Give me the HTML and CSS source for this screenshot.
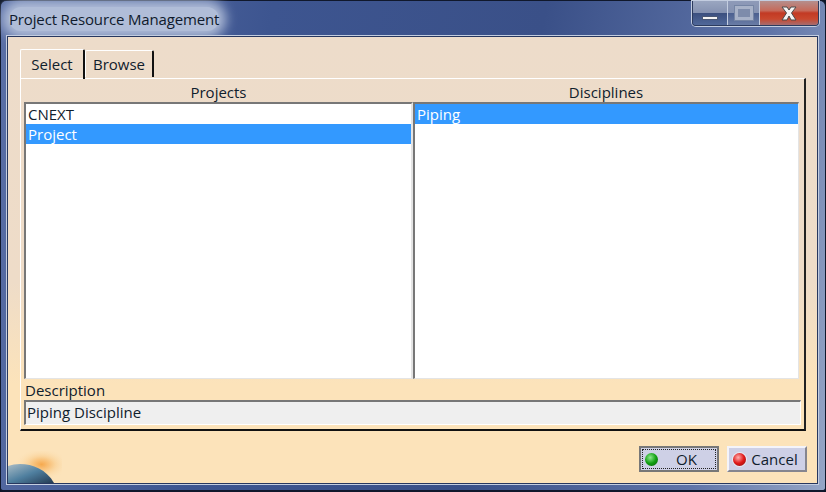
FILE: index.html
```html
<!DOCTYPE html>
<html lang="en">

<head>
    <meta charset="UTF-8">
    <title>Project Resource Management</title>
    <link rel="stylesheet" href="styles.css">
</head>

<body>
    <div class="window">
        <div class="titlebar">
            <div class="title">Project Resource Management</div>
            <div class="controls">
                <div class="ctl ctl_min"><span class="min_bar"></span></div>
                <div class="ctl ctl_max"><span class="max_box"></span></div>
                <div class="ctl ctl_close">
                    <svg width="26" height="15" viewBox="0 0 26 15">
                        <path d="M6 1h5l2 3 2-3h5l-4.500 6 4.500 7h-5l-2-4-2 4H6l4.500-7z" fill="#f4f4f4" stroke="#4a4a4a" stroke-width="1"/>
                    </svg>
                </div>
            </div>
        </div>
        <div class="client">
            <div class="tabs">
                <div class="tab tab_on">Select</div>
                <div class="tab">Browse</div>
            </div>
            <div class="panel">
                <div class="columns">
                    <div class="col">
                        <div class="col_head">Projects</div>
                        <ul class="list">
                            <li>CNEXT</li>
                            <li class="selected">Project</li>
                        </ul>
                    </div>
                    <div class="col col_right">
                        <div class="col_head">Disciplines</div>
                        <ul class="list">
                            <li class="selected">Piping</li>
                        </ul>
                    </div>
                </div>
                <div class="desc_label">Description</div>
                <div class="desc_field">Piping Discipline</div>
            </div>
            <div class="footer">
                <svg class="planet" width="54" height="32" viewBox="0 0 54 32">
                    <defs>
                        <radialGradient id="glow" cx="0.62" cy="0.42" r="0.5">
                            <stop offset="0" stop-color="#f6a94e"/>
                            <stop offset="0.5" stop-color="#fad49c"/>
                            <stop offset="1" stop-color="#fce3ba" stop-opacity="0"/>
                        </radialGradient>
                        <linearGradient id="earth" x1="0" y1="0" x2="1" y2="1">
                            <stop offset="0" stop-color="#a9bcc6"/>
                            <stop offset="0.5" stop-color="#4f7f9f"/>
                            <stop offset="1" stop-color="#243a52"/>
                        </linearGradient>
                    </defs>
                    <rect width="54" height="32" fill="url(#glow)"/>
                    <path d="M0 15 C14 10 36 14 46 32 L0 32z" fill="url(#earth)"/>
                </svg>
                <div class="buttons">
                    <div class="btn btn_default">
                        <span class="ball ball_green"></span>
                        <span class="btn_text">OK</span>
                    </div>
                    <div class="btn">
                        <span class="ball ball_red"></span>
                        <span class="btn_text">Cancel</span>
                    </div>
                </div>
            </div>
        </div>
    </div>
</body>

</html>
```

FILE: styles.css
```css
* {
    margin: 0;
    padding: 0;
    box-sizing: border-box;
}

html,
body {
    height: 100%;
}

body {
    font-family: "Open Sans", "Liberation Sans", sans-serif;
    font-size: 15px;
    color: #10202c;
    background: #0d1526;
    overflow: hidden;
}

.window {
    height: 492px;
    display: flex;
    flex-direction: column;
    border: 1px solid #10182c;
    border-bottom-width: 2px;
    border-radius: 6px 6px 4px 4px;
    background: linear-gradient(100deg, #5a6fa6 0%, #3d5590 30%, #3a5088 60%, #5f74a8 85%, #96a6c6 100%);
}

.titlebar {
    height: 35px;
    display: flex;
    justify-content: space-between;
    padding: 0 6px 0 8px;
}

.title {
    height: 24px;
    margin-top: 6px;
    font-size: 15px;
    line-height: 24px;
    letter-spacing: -0.15px;
    color: #0f1a2c;
    background: #b0bdd8;
    box-shadow: 0 0 12px 7px #b0bdd8;
    border-radius: 12px;
}

.controls {
    display: flex;
    height: 25px;
    border: 1px solid #2c3b5e;
    border-top: 0;
    border-radius: 0 0 4px 4px;
    overflow: hidden;
    box-shadow: 0 0 0 1px #c3cde0;
}

.ctl {
    display: flex;
    align-items: center;
    justify-content: center;
}

.ctl_min {
    width: 35px;
    border-right: 1px solid #c3cde0;
    background: linear-gradient(#9aa6c0 0%, #8592b1 48%, #3c507f 52%, #50689a 100%);
    align-items: flex-end;
    padding-bottom: 5px;
}

.min_bar {
    width: 16px;
    height: 4px;
    background: #f4f4f4;
    border: 1px solid #4a5874;
}

.ctl_max {
    width: 32px;
    background: linear-gradient(#8e9ab8 0%, #8592b1 48%, #4c6090 52%, #6a7da6 100%);
    border-right: 1px solid #c3cde0;
}

.max_box {
    width: 18px;
    height: 14px;
    background: #7e8cab;
    border: 3px solid #a8b2c8;
    box-shadow: 0 0 0 1px #7585a5;
}

.ctl_close {
    width: 58px;
    background: linear-gradient(#b58e8c 0%, #c66a5a 40%, #c23a24 50%, #c9482e 75%, #a56c70 100%);
}

.client {
    margin: 0 7px 6px 6px;
    flex: 1;
    padding: 12px 12px 0 12px;
    display: flex;
    flex-direction: column;
    border: 1px solid #27375f;
    background: linear-gradient(#eddcca 0%, #eedcc8 55%, #fce3ba 78%, #fce3ba 100%);
    box-shadow: 0 0 0 1px #c3cde0;
}

.tabs {
    height: 30px;
    display: flex;
    align-items: flex-end;
    margin-bottom: -1px;
    position: relative;
    z-index: 1;
}

.tab {
    width: 69px;
    height: 27px;
    margin-bottom: 2px;
    text-align: center;
    line-height: 26px;
    border-top: 1px solid #fff;
    border-left: 1px solid #fff;
    border-right: 2px solid #111;
    border-radius: 2px 2px 0 0;
}

.tab_on {
    width: 65px;
    height: 30px;
    margin-bottom: 0;
    padding-top: 1px;
}

.panel {
    width: 786px;
    height: 353px;
    padding: 4px 5px 5px 3px;
    border-top: 1px solid #fff;
    border-left: 1px solid #fff;
    border-right: 2px solid #222;
    border-bottom: 2px solid #111;
}

.columns {
    display: flex;
    height: 296px;
}

.col {
    width: 390px;
    display: flex;
    flex-direction: column;
}

.col_right {
    width: 387px;
}

.col_head {
    height: 19px;
    text-align: center;
    line-height: 18px;
}

.list {
    flex: 1;
    list-style: none;
    background: #fff;
    border-top: 2px solid #777;
    border-left: 2px solid #777;
    border-right: 2px solid #e4e4e4;
    border-bottom: 1px solid #e4e4e4;
}

.col_right .list {
    border-right-width: 1px;
}

.list li {
    height: 20px;
    line-height: 21px;
    padding-left: 2px;
}

.list .selected {
    background: #3399ff;
    color: #fff;
}

.desc_label {
    height: 21px;
    line-height: 23px;
    padding-left: 1px;
}

.desc_field {
    height: 25px;
    line-height: 21px;
    width: 777px;
    padding-left: 1px;
    background: #efefef;
    border-top: 2px solid #777;
    border-left: 2px solid #777;
    border-right: 1px solid #fff;
    border-bottom: 1px solid #fff;
}

.footer {
    flex: 1;
    margin: 0 -12px 0 -12px;
    display: flex;
    justify-content: space-between;
    align-items: flex-end;
}

.planet {
    display: block;
}

.buttons {
    display: flex;
    gap: 8px;
    padding-bottom: 11px;
    margin-right: 10px;
}

.btn {
    width: 80px;
    height: 26px;
    display: flex;
    align-items: center;
    padding-left: 4px;
    background: #ced0e6;
    border-top: 2px solid #f4f4fa;
    border-left: 2px solid #f4f4fa;
    border-right: 2px solid #85858f;
    border-bottom: 2px solid #85858f;
}

.btn_default {
    outline: 1px dotted #222;
    outline-offset: -4px;
    border-color: #777;
}

.ball {
    width: 13px;
    height: 13px;
    border-radius: 50%;
    flex: none;
}

.ball_green {
    background: radial-gradient(circle at 40% 35%, #8fe88f, #12a012 50%, #0a5a0a);
}

.ball_red {
    background: radial-gradient(circle at 40% 35%, #ffb0b0, #e01818 50%, #801010);
    box-shadow: 0 0 0 1px #e9e9f2;
}

.btn_text {
    flex: 1;
    text-align: center;
    padding-right: 2px;
}
```
